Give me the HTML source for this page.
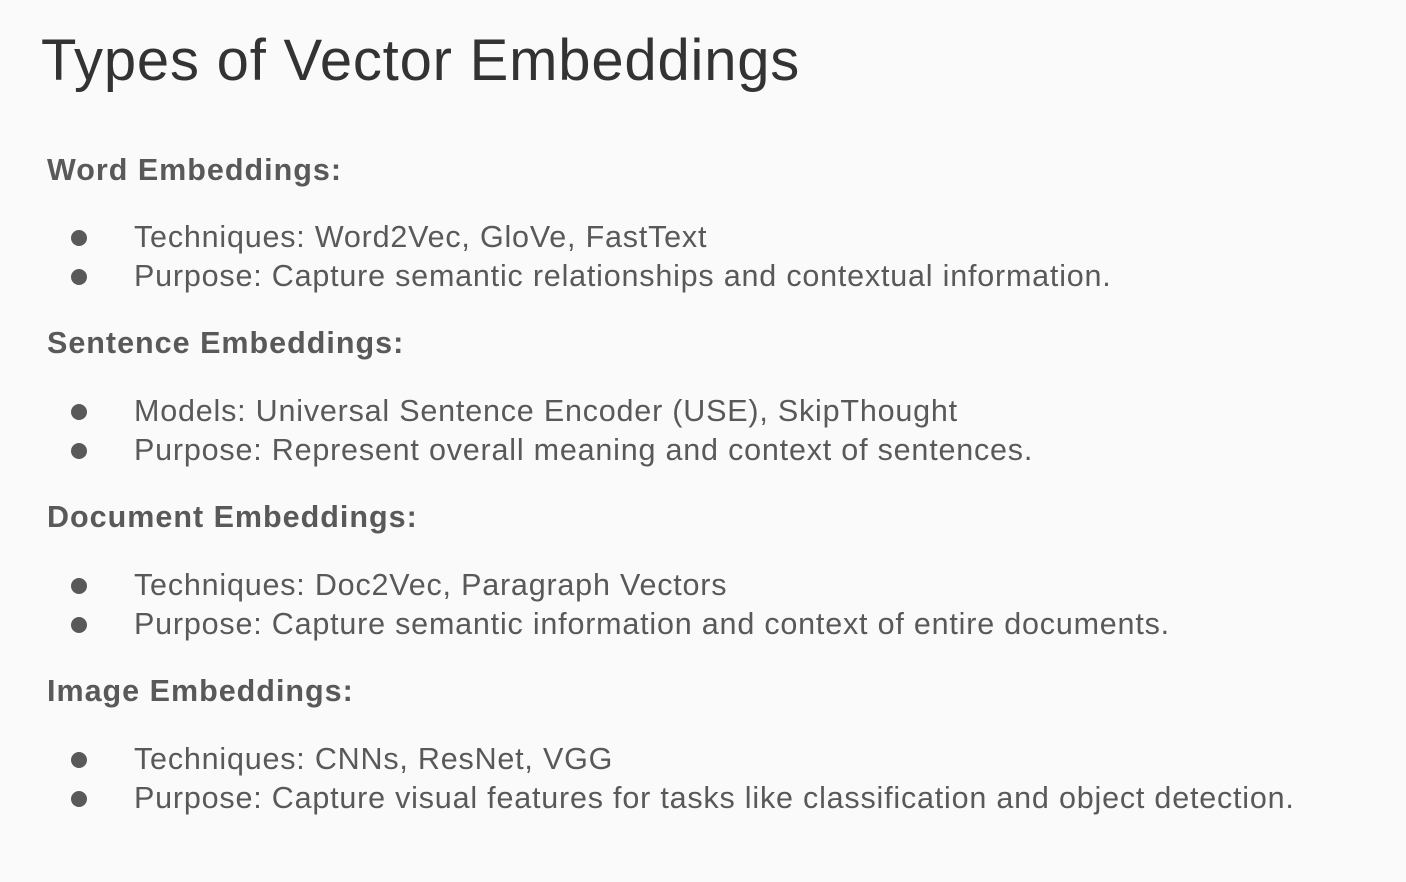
<!DOCTYPE html>
<html><head><meta charset="utf-8"><style>
body{margin:0;width:1406px;height:882px;background:#fafafa;overflow:hidden;font-family:"Liberation Sans",sans-serif;position:relative}
div{position:absolute;line-height:1;white-space:nowrap}
.t{left:41px;top:32px;font-size:58px;color:#333;letter-spacing:0.8px}
.h{left:47px;font-size:30.5px;font-weight:bold;color:#595959;letter-spacing:1px}
.b{left:134px;font-size:30.5px;color:#595959;letter-spacing:0.8px}
.d{left:71px;width:16px;height:16px;border-radius:50%;background:#595959}
</style></head><body>
<div class="t">Types of Vector Embeddings</div>
<div class="h" style="top:155px">Word Embeddings:</div>
<div class="d" style="top:230px"></div><div class="b" style="top:222px">Techniques: Word2Vec, GloVe, FastText</div>
<div class="d" style="top:269px"></div><div class="b" style="top:261px">Purpose: Capture semantic relationships and contextual information.</div>
<div class="h" style="top:328px">Sentence Embeddings:</div>
<div class="d" style="top:404px"></div><div class="b" style="top:396px">Models: Universal Sentence Encoder (USE), SkipThought</div>
<div class="d" style="top:443px"></div><div class="b" style="top:435px">Purpose: Represent overall meaning and context of sentences.</div>
<div class="h" style="top:502px">Document Embeddings:</div>
<div class="d" style="top:578px"></div><div class="b" style="top:570px">Techniques: Doc2Vec, Paragraph Vectors</div>
<div class="d" style="top:617px"></div><div class="b" style="top:609px">Purpose: Capture semantic information and context of entire documents.</div>
<div class="h" style="top:676px">Image Embeddings:</div>
<div class="d" style="top:752px"></div><div class="b" style="top:744px">Techniques: CNNs, ResNet, VGG</div>
<div class="d" style="top:791px"></div><div class="b" style="top:783px">Purpose: Capture visual features for tasks like classification and object detection.</div>
</body></html>
